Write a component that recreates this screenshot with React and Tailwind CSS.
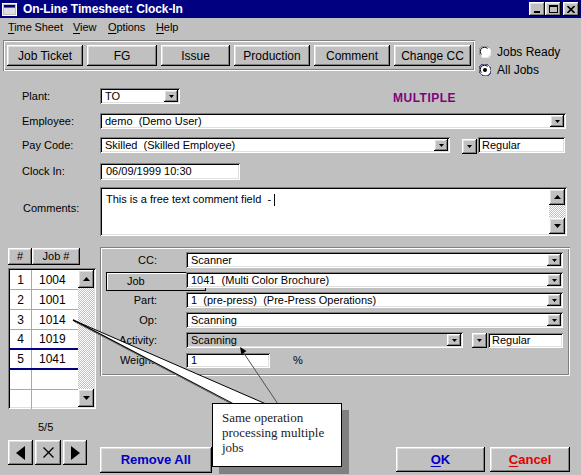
import React from "react";

const raised =
  "shadow-[inset_-1px_-1px_#000,inset_1px_1px_#fff,inset_-2px_-2px_#808080,inset_2px_2px_#dfdfdf]";
const sunken =
  "shadow-[inset_1px_1px_#808080,inset_-1px_-1px_#fff,inset_2px_2px_#000,inset_-2px_-2px_#dfdfdf]";
const groove =
  "shadow-[inset_1px_1px_#808080,inset_-1px_-1px_#fff,inset_2px_2px_#fff,inset_-2px_-2px_#808080]";
const dither =
  "bg-[repeating-conic-gradient(#c0c0c0_0%_25%,#ffffff_0%_50%)] bg-[length:2px_2px]";

function DownArrow() {
  return (
    <svg width="5" height="3" viewBox="0 0 5 3">
      <polygon points="0,0 5,0 2.5,3" fill="#000" />
    </svg>
  );
}

function DropBtn({ cls = "w-[14px] h-[12px] mr-[2px]" }) {
  return (
    <div className={`${cls} ${raised} bg-[#c0c0c0] flex items-center justify-center shrink-0`}>
      <DownArrow />
    </div>
  );
}

function Combo({ className, text, gray }) {
  return (
    <div
      className={`flex items-center ${sunken} ${gray ? "bg-[#c0c0c0]" : "bg-white"} ${className}`}
    >
      <span className="pl-[5px] flex-1 whitespace-pre overflow-hidden">{text}</span>
      <DropBtn />
    </div>
  );
}

function Btn({ className, children }) {
  return (
    <div className={`flex items-center justify-center bg-[#c0c0c0] ${raised} ${className}`}>
      {children}
    </div>
  );
}

function Radio({ checked }) {
  return (
    <svg width="12" height="12" viewBox="0 0 12 12">
      <circle cx="6" cy="6" r="5.5" fill="#fff" />
      <path d="M1.5 9.5 A5.5 5.5 0 0 1 9.5 1.5" stroke={checked ? "#000060" : "#808080"} fill="none" strokeWidth="1" />
      <path d="M2.5 8.5 A4.2 4.2 0 0 1 8.5 2.5" stroke="#000" fill="none" strokeWidth="1" />
      <path d="M10.5 2.5 A5.5 5.5 0 0 1 2.5 10.5" stroke={checked ? "#000060" : "#fff"} fill="none" strokeWidth="1" />
      {checked && <circle cx="6" cy="6" r="2" fill="#000" />}
    </svg>
  );
}

function ScrollBtn({ up, cls }) {
  return (
    <div className={`${cls} ${raised} bg-[#c0c0c0] flex items-center justify-center shrink-0`}>
      <svg width="7" height="4" viewBox="0 0 7 4">
        {up ? (
          <polygon points="0,4 7,4 3.5,0" fill="#000" />
        ) : (
          <polygon points="0,0 7,0 3.5,4" fill="#000" />
        )}
      </svg>
    </div>
  );
}

function FormRow({ label, className = "", children }) {
  return (
    <div className={`flex items-center pl-[22px] ${className}`}>
      <div className="w-[78px] shrink-0">{label}</div>
      {children}
    </div>
  );
}

function PanelRow({ label, children }) {
  return (
    <div className="flex items-center h-[16px]">
      <div className="w-[86px] shrink-0 pr-[29px] text-right">{label}</div>
      {children}
    </div>
  );
}

function U({ children }) {
  return <span className="underline underline-offset-2">{children}</span>;
}

const jobs = ["1004", "1001", "1014", "1019", "1041", "", ""];

export default function App() {
  return (
    <div className="relative w-[581px] h-[475px] bg-[#c0c0c0] overflow-hidden text-[11px] text-black font-['Liberation_Sans',Arial,sans-serif]">
      {/* Title bar */}
      <div className="h-[18px] bg-[#000080] flex items-center pl-[2px] pr-[2px]">
        <svg width="15" height="13" viewBox="0 0 15 13">
          <rect x="0.5" y="0.5" width="14" height="12" fill="#c0c0c0" stroke="#fff" />
          <rect x="2" y="2" width="11" height="2.5" fill="#000080" />
          <rect x="2" y="5" width="11" height="6" fill="#dfdfdf" />
        </svg>
        <span className="ml-[6px] text-white font-bold text-[12px] tracking-[-0.1px]">
          On-Line Timesheet: Clock-In
        </span>
        <div className="ml-auto flex items-center">
          <Btn className="w-[16px] h-[14px] items-end pb-[3px]">
            <div className="w-[6px] h-[2px] bg-black" />
          </Btn>
          <Btn className="w-[16px] h-[14px]">
            <div className="w-[9px] h-[8px] border border-black border-t-2" />
          </Btn>
          <Btn className="w-[16px] h-[14px] ml-[2px]">
            <svg width="8" height="7" viewBox="0 0 8 7">
              <path d="M0.5 0 L7.5 7 M7.5 0 L0.5 7" stroke="#000" strokeWidth="1.6" />
            </svg>
          </Btn>
        </div>
      </div>

      {/* Menu bar */}
      <div className="h-[19px] flex items-center pl-[8px] text-[11px] tracking-[-0.1px]">
        <div className="w-[65px] shrink-0">
          <U>T</U>ime Sheet
        </div>
        <div className="w-[35px] shrink-0">
          <U>V</U>iew
        </div>
        <div className="w-[48px] shrink-0">
          <U>O</U>ptions
        </div>
        <div className="shrink-0">
          <U>H</U>elp
        </div>
      </div>

      {/* Toolbar */}
      <div className="mt-[3px] flex items-start h-[31px]">
        <div className={`ml-[3px] w-[472px] h-[31px] shrink-0 flex items-center pl-[4px] gap-[4px] ${groove}`}>
          <Btn className="w-[76px] h-[21px] text-[12px]">Job Ticket</Btn>
          <Btn className="w-[70px] h-[21px] text-[12px]">FG</Btn>
          <Btn className="w-[69px] h-[21px] text-[12px]">Issue</Btn>
          <Btn className="w-[76px] h-[21px] text-[12px]">Production</Btn>
          <Btn className="w-[76px] h-[21px] text-[12px]">Comment</Btn>
          <Btn className="w-[77px] h-[21px] text-[12px]">Change CC</Btn>
        </div>
        <div className="ml-[4px] mt-[6px] flex flex-col gap-[6px] text-[12px]">
          <div className="flex items-center gap-[6px] h-[12px]">
            <Radio />
            <span>Jobs Ready</span>
          </div>
          <div className="flex items-center gap-[6px] h-[12px]">
            <Radio checked />
            <span>All Jobs</span>
          </div>
        </div>
      </div>

      {/* Form */}
      <FormRow label="Plant:" className="mt-[17px] h-[16px]">
        <Combo className="w-[80px] h-[16px]" text="TO" />
        <span className="ml-[213px] mt-[3px] font-bold text-[12px] tracking-[0.5px] text-[#800080]">
          MULTIPLE
        </span>
      </FormRow>
      <FormRow label="Employee:" className="mt-[9px] h-[16px]">
        <Combo className="w-[466px] h-[16px]" text="demo  (Demo User)" />
      </FormRow>
      <FormRow label="Pay Code:" className="mt-[8px] h-[16px]">
        <Combo className="w-[350px] h-[16px]" text="Skilled  (Skilled Employee)" />
        <DropBtn cls="w-[15px] h-[15px] ml-[12px] mt-[3px]" />
        <div className={`ml-[1px] w-[87px] h-[16px] bg-white ${sunken} flex items-center pl-[4px]`}>
          Regular
        </div>
      </FormRow>
      <FormRow label="Clock In:" className="mt-[10px] h-[17px]">
        <div className={`w-[140px] h-[17px] bg-white ${sunken} flex items-center pl-[6px]`}>
          06/09/1999 10:30
        </div>
      </FormRow>
      <div className="mt-[7px] flex pl-[23px] h-[49px]">
        <div className="w-[77px] shrink-0 pt-[13px]">Comments:</div>
        <div className={`w-[467px] h-[49px] bg-white ${sunken} flex p-[2px]`}>
          <div className="flex-1 pl-[4px] pt-[2px] whitespace-pre">
            This is a free text comment field  - <span className="inline-block w-[1px] h-[12px] bg-black align-middle" />
          </div>
          <div className="w-[16px] flex flex-col">
            <ScrollBtn up cls="h-[16px]" />
            <div className={`flex-1 ${dither}`} />
            <ScrollBtn cls="h-[16px]" />
          </div>
        </div>
      </div>

      {/* Lower section */}
      <div className="mt-[11px] flex">
        {/* Left column: job grid */}
        <div className="ml-[8px] w-[88px] flex flex-col">
          <div className="mt-[1px] flex h-[17px]">
            <Btn className="w-[24px] h-[17px]">#</Btn>
            <Btn className="w-[48px] h-[17px]">Job #</Btn>
          </div>
          <div className={`mt-[3px] h-[141px] bg-white ${sunken} p-[2px] flex overflow-hidden`}>
            <div className="w-[68px] flex flex-col">
              {jobs.map((j, i) => (
                <div
                  key={i}
                  className={`flex shrink-0 h-[20px] ${
                    i === 3 || i === 4 ? "border-b-2 border-[#000080]" : "border-b border-[#a8a8a8]"
                  }`}
                >
                  <div className="w-[22px] border-r border-[#a8a8a8] flex items-center justify-center text-[12px]">
                    {j ? i + 1 : ""}
                  </div>
                  <div className="flex-1 flex items-center pl-[7px] text-[12px]">{j}</div>
                </div>
              ))}
            </div>
            <div className="w-[16px] flex flex-col">
              <ScrollBtn up cls="h-[18px]" />
              <div className={`flex-1 ${dither}`} />
              <ScrollBtn cls="h-[18px]" />
            </div>
          </div>
          <div className="mt-[12px] pl-[30px] h-[12px] leading-[12px]">5/5</div>
          <div className="mt-[7px] flex">
            <Btn className="w-[25px] h-[25px]">
              <svg width="9" height="14" viewBox="0 0 9 14">
                <polygon points="9,0 9,14 0,7" fill="#000" />
              </svg>
            </Btn>
            <Btn className="ml-[2px] w-[26px] h-[25px]">
              <svg width="11" height="11" viewBox="0 0 11 11">
                <path d="M0.5 0.5 L10.5 10.5 M10.5 0.5 L0.5 10.5" stroke="#000" strokeWidth="1.3" />
              </svg>
            </Btn>
            <Btn className="ml-[2px] w-[24px] h-[25px]">
              <svg width="9" height="14" viewBox="0 0 9 14">
                <polygon points="0,0 0,14 9,7" fill="#000" />
              </svg>
            </Btn>
          </div>
        </div>

        {/* Right column */}
        <div className="ml-[4px] w-[470px] flex flex-col">
          <div className={`h-[129px] ${groove} pt-[5px] flex flex-col gap-[4px]`}>
            <PanelRow label="CC:">
              <Combo className="w-[377px] h-[16px]" text="Scanner" />
            </PanelRow>
            <div className="flex items-start h-[16px]">
              <div className="ml-[6px] w-[100px] h-[19px] border border-black shadow-[inset_1px_1px_#fff] pl-[20px] flex items-center shrink-0">
                Job
              </div>
              <Combo className="-ml-[20px] w-[377px] h-[16px]" text="1041  (Multi Color Brochure)" />
            </div>
            <PanelRow label="Part:">
              <Combo className="w-[377px] h-[16px]" text="1  (pre-press)  (Pre-Press Operations)" />
            </PanelRow>
            <PanelRow label="Op:">
              <Combo className="w-[377px] h-[16px]" text="Scanning" />
            </PanelRow>
            <PanelRow label="Activity:">
              <Combo gray className="w-[277px] h-[16px]" text="Scanning" />
              <DropBtn cls="w-[15px] h-[15px] ml-[9px]" />
              <div className={`ml-[1px] w-[75px] h-[15px] bg-white ${sunken} flex items-center pl-[4px]`}>
                Regular
              </div>
            </PanelRow>
            <PanelRow label="Weight:">
              <div className={`w-[84px] h-[15px] bg-white ${sunken} flex items-center pl-[5px]`}>1</div>
              <span className="ml-[23px]">%</span>
            </PanelRow>
          </div>
          <div className="mt-[71px] flex">
            <Btn className="w-[112px] h-[26px] font-bold text-[13px] text-[#0000c8]">Remove All</Btn>
            <Btn className="ml-[184px] w-[90px] h-[25px] font-bold text-[13px] text-[#0000c8]">
              <U>O</U>K
            </Btn>
            <Btn className="ml-[5px] w-[80px] h-[25px] font-bold text-[13px] text-[#e00000]">
              <U>C</U>ancel
            </Btn>
          </div>
        </div>
      </div>

      {/* Callout overlay */}
      <svg className="absolute left-0 top-0 pointer-events-none" width="581" height="475" viewBox="0 0 581 475">
        <polygon points="73,320 233,404 266,404" fill="#fff" />
        <line x1="73" y1="320" x2="233" y2="404" stroke="#000" strokeWidth="1.6" />
        <line x1="75" y1="322" x2="236" y2="406" stroke="#808080" strokeWidth="1" />
        <line x1="73" y1="320" x2="266" y2="404" stroke="#000" strokeWidth="1" />
        <line x1="278" y1="404" x2="243" y2="352" stroke="#505050" strokeWidth="1" />
        <polygon points="240,347 246.4,351.1 241.4,354.5" fill="#000" />
      </svg>
      <div className="absolute left-[212px] top-[403px] w-[130px] h-[64px] bg-white border border-black shadow-[7px_7px_0_#808080] pl-[9px] pt-[6px] font-['Liberation_Serif',serif] text-[13px] leading-[15px] text-[#222]">
        Same operation
        <br />
        processing multiple
        <br />
        jobs
      </div>
    </div>
  );
}
